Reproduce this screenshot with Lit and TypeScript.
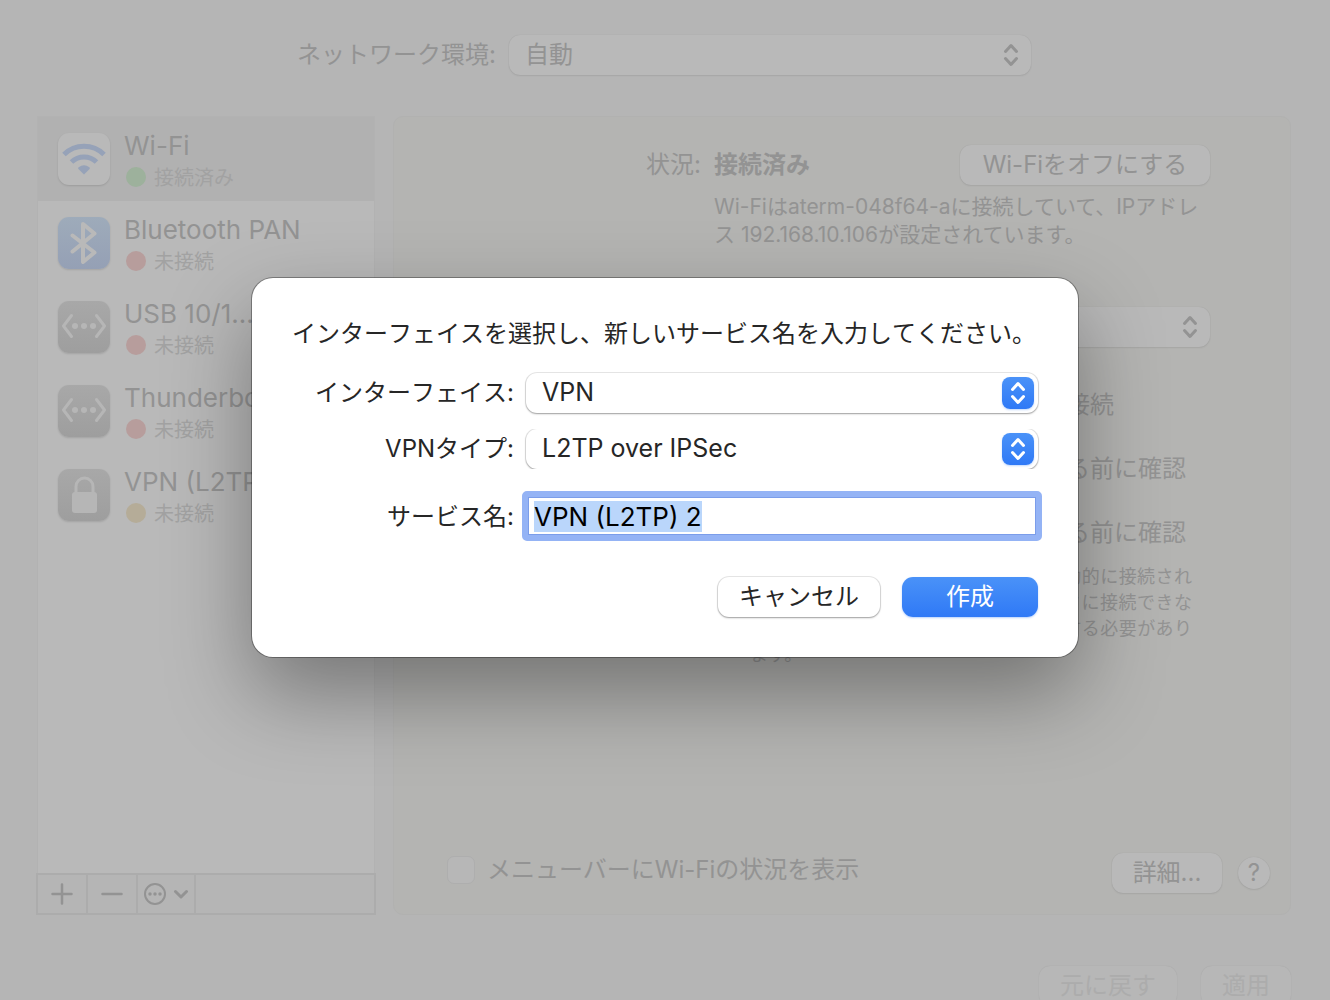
import { LitElement, html, css, svg } from "lit";
import { customElement, property, query } from "lit/decorators.js";

type IconKind = "wifi" | "bluetooth" | "ethernet" | "lock";

interface Service {
  name: string;
  state: string;
  tone: "green" | "red" | "amber";
  icon: IconKind;
}

const SERVICES: Service[] = [
  { name: "Wi-Fi", state: "接続済み", tone: "green", icon: "wifi" },
  { name: "Bluetooth PAN", state: "未接続", tone: "red", icon: "bluetooth" },
  { name: "USB 10/1…1000 LAN", state: "未接続", tone: "red", icon: "ethernet" },
  { name: "Thunderbolt ブリッジ", state: "未接続", tone: "red", icon: "ethernet" },
  { name: "VPN (L2TP)", state: "未接続", tone: "amber", icon: "lock" },
];

const GLYPHS = {
  wifi: svg`
    <g fill="none" stroke="#96a2b8" stroke-width="5">
      <path d="M6 21.500a28.500 28.500 0 0 1 40 0"></path>
      <path d="M13.500 29a18 18 0 0 1 25 0"></path>
    </g>
    <path d="M26 41.500l-5.600-5.600q-.8-.9.200-1.700a9 9 0 0 1 10.800 0q1 .8.2 1.700z" fill="#96a2b8"></path>`,
  bluetooth: svg`
    <path d="M14.500 18.500L36.500 35.500L25 45V7L36.500 16.500L14.500 34.500" fill="none" stroke="#b9b9b9"
      stroke-width="4" stroke-linejoin="round" stroke-linecap="round"></path>`,
  ethernet: svg`
    <g fill="none" stroke="#b6b6b6" stroke-width="3" stroke-linecap="round" stroke-linejoin="round">
      <path d="M13.500 14.500L5.500 25l8 10.500"></path>
      <path d="M38.500 14.500L46.500 25l-8 10.500"></path>
    </g>
    <g fill="#b6b6b6">
      <circle cx="17" cy="25" r="3"></circle><circle cx="26" cy="25" r="3"></circle><circle cx="35" cy="25" r="3"></circle>
    </g>`,
  lock: svg`
    <path d="M18 24v-6.500a8.500 8.500 0 0 1 17 0V24" fill="none" stroke="#b6b6b6" stroke-width="3"></path>
    <rect x="14" y="23" width="25" height="21" rx="3" fill="#b6b6b6"></rect>`,
};

const arrows = () => html`
  <svg class="arrows" viewBox="0 0 16 24" width="16" height="24" aria-hidden="true">
    <path d="M2.500 8.500L8 2.500l5.500 6M2.500 15.500L8 21.500l5.500-6" fill="none" stroke="currentColor"
      stroke-width="3" stroke-linecap="round" stroke-linejoin="round"></path>
  </svg>`;

const shared = css`
  * { box-sizing: border-box; }
  button, select, input { font: inherit; color: inherit; margin: 0; }
  button, select { border: 0; appearance: none; }
  svg { display: block; }
  .picker { position: relative; display: flex; min-width: 0; }
  .picker select {
    flex: 1;
    width: 100%;
    height: 40px;
    padding: 0 48px 0 16px;
    border-radius: 11px;
    outline: none;
  }
`;

@customElement("service-item")
export class ServiceItem extends LitElement {
  @property({ attribute: false }) service!: Service;

  static styles = [shared, css`
    :host { display: flex; gap: 14px; height: 84px; padding: 16px 0 0 20px; }
    :host([selected]) { background: #b1b1b1; }
    .tile {
      flex: none;
      width: 52px;
      height: 52px;
      border-radius: 11px;
      background: linear-gradient(#a8a8a8, #9e9e9e);
      box-shadow: 0 1px 2px rgba(0, 0, 0, 0.12);
    }
    .wifi { background: #b9b9b9; }
    .bluetooth { background: linear-gradient(#9eabba, #95a0b5); }
    .words { min-width: 0; white-space: nowrap; overflow: hidden; margin-top: -3px; }
    .name { font-size: 26px; line-height: 32px; }
    .state { display: flex; align-items: center; gap: 8px; font-size: 20px; line-height: 32px; color: #a2a2a2; }
    .dot { width: 20px; height: 20px; border-radius: 50%; margin: 0 0 2px 2px; }
    .green { background: #9db19c; }
    .red { background: #b79d9c; }
    .amber { background: #b5ac98; }
  `];

  render() {
    const s = this.service;
    return html`
      <div class="tile ${s.icon}">
        <svg viewBox="0 0 52 52" width="52" height="52" aria-hidden="true">${GLYPHS[s.icon]}</svg>
      </div>
      <div class="words">
        <div class="name">${s.name}</div>
        <div class="state"><span class="dot ${s.tone}"></span>${s.state}</div>
      </div>`;
  }
}

@customElement("new-service-dialog")
export class NewServiceDialog extends LitElement {
  @query("#service-name") nameField!: HTMLInputElement;

  firstUpdated() {
    this.nameField.focus();
    this.nameField.select();
  }

  static styles = [shared, css`
    :host { display: block; width: 826px; max-width: 100%; }
    .sheet {
      padding: 40px;
      border-radius: 21px;
      background: #fff;
      color: #262626;
      box-shadow: 0 0 0 1px rgba(0, 0, 0, 0.32), 0 36px 84px rgba(0, 0, 0, 0.36);
    }
    h1 { margin: 0 0 23px; font-size: 24px; font-weight: 400; line-height: 32px; font-kerning: none; }
    .fields { display: grid; grid-template-columns: 222px minmax(0, 1fr); column-gap: 12px; row-gap: 16px; }
    .fields > label { text-align: right; line-height: 40px; font-size: 24px; font-kerning: none; }
    .picker { font-size: 25px; }
    .picker select {
      padding-bottom: 2px;
      background: #fff;
      box-shadow: 0 0 0 1px rgba(0, 0, 0, 0.09), 0 1px 2px rgba(0, 0, 0, 0.32);
    }
    .clipped { clip-path: inset(0 -3px); }
    .knob {
      position: absolute;
      right: 4px;
      top: 4px;
      width: 32px;
      height: 32px;
      display: grid;
      place-items: center;
      border-radius: 8px;
      color: #fff;
      background: linear-gradient(#4a92f8, #2f79f6);
      box-shadow: 0 1px 2px rgba(47, 121, 246, 0.3);
      pointer-events: none;
    }
    .name-label { margin-top: 12px; }
    .name-box {
      height: 50px;
      min-width: 0;
      margin: 6px -4px -6px;
      padding: 1px 6px;
      border: 6px solid #94b3f5;
      border-radius: 5px;
      background: #fff;
      color: #000;
      font-size: 26px;
      line-height: 32px;
      outline: none;
      box-shadow: inset 0 0 0 1px #7b9dea;
    }
    .name-box::selection { background: rgba(186, 214, 251, 0.996); color: #000; }
    .buttons { display: flex; justify-content: flex-end; gap: 22px; margin-top: 40px; font-size: 24px; }
    .buttons button { height: 40px; padding: 0; border-radius: 11px; }
    .cancel { width: 162px; background: #fff; box-shadow: 0 0 0 1px rgba(0, 0, 0, 0.09), 0 1px 2px rgba(0, 0, 0, 0.32); }
    .buttons .create {
      width: 136px;
      color: #fff;
      background: linear-gradient(#4a92f8, #2f79f6);
      box-shadow: 0 1px 2px rgba(47, 121, 246, 0.35);
    }
  `];

  render() {
    return html`
      <form class="sheet" role="dialog" aria-labelledby="title" @submit=${(e: Event) => e.preventDefault()}>
        <h1 id="title">インターフェイスを選択し、新しいサービス名を入力してください。</h1>
        <div class="fields">
          <label for="interface">インターフェイス:</label>
          <div class="picker">
            <select id="interface"><option>VPN</option></select>
            <span class="knob">${arrows()}</span>
          </div>
          <label for="vpn-type">VPNタイプ:</label>
          <div class="picker clipped">
            <select id="vpn-type"><option>L2TP over IPSec</option></select>
            <span class="knob">${arrows()}</span>
          </div>
          <label class="name-label" for="service-name">サービス名:</label>
          <input class="name-box" id="service-name" type="text" .value=${"VPN (L2TP) 2"} autocomplete="off" spellcheck="false">
        </div>
        <div class="buttons">
          <button class="cancel" type="button">キャンセル</button>
          <button class="create" type="submit">作成</button>
        </div>
      </form>`;
  }
}

@customElement("app-root")
export class AppRoot extends LitElement {
  static styles = [shared, css`
    :host {
      display: block;
      position: relative;
      height: 100vh;
      overflow: hidden;
      background: #b5b5b5;
      color: #939393;
      font-family: Inter, "Noto Sans CJK JP", sans-serif;
      font-size: 24px;
      line-height: 32px;
    }
    .window { padding: 35px 39px 0 37px; }
    .location { display: flex; justify-content: center; align-items: center; gap: 13px; }
    .location .picker { width: 522px; }
    .soft, .picker select {
      background: #b9b9b9;
      box-shadow: 0 0 1px rgba(0, 0, 0, 0.12), 0 1px 2px rgba(0, 0, 0, 0.07);
    }
    .picker .arrows { position: absolute; right: 12px; top: 8px; pointer-events: none; }
    .body { display: flex; gap: 18px; margin-top: 41px; height: 799px; }
    .side { width: 338px; flex: none; display: flex; flex-direction: column; }
    .list { flex: 1; border: 1px solid #b2b2b2; border-bottom: 0; background: #b9b9b9; }
    .tools { display: flex; height: 42px; margin: 0 -1px; border: 2px solid #acacac; }
    .tools button {
      display: flex;
      align-items: center;
      justify-content: center;
      gap: 7px;
      width: 50px;
      padding: 0;
      background: none;
      border-right: 2px solid #acacac;
    }
    .tools .more { width: 58px; }
    .panel {
      flex: 1;
      min-width: 0;
      display: flex;
      flex-direction: column;
      justify-content: space-between;
      border: 1px solid #b1b1b0;
      border-radius: 10px;
      background: #b4b4b2;
    }
    .settings {
      display: grid;
      grid-template-columns: 307px minmax(0, 1fr);
      column-gap: 13px;
      padding: 28px 80px 0 0;
    }
    .settings > .term { text-align: right; line-height: 40px; }
    .status { display: flex; justify-content: space-between; }
    .status strong { line-height: 40px; }
    .soft { height: 40px; padding: 0; border-radius: 11px; }
    .toggle { width: 250px; }
    .detail { grid-column: 2; margin: 8px 0 0; font-size: 21px; line-height: 28px; }
    .spaced { margin-top: 58px; }
    .options { grid-column: 2; margin-top: 42px; display: grid; row-gap: 32px; }
    .check { display: flex; align-items: center; gap: 12px; white-space: nowrap; }
    .check input {
      appearance: none;
      width: 28px;
      height: 28px;
      border: 1px solid #aeaeae;
      border-radius: 7px;
      background: #b7b7b7;
    }
    .hint {
      grid-column: 2;
      width: 442px;
      margin: 15px 0 0 36px;
      font-size: 18px;
      line-height: 26px;
      text-align: justify;
    }
    .bottom { display: flex; align-items: center; padding: 0 20px 21px 53px; }
    .bottom .check { flex: 1; padding-bottom: 6px; }
    .more-info { width: 110px; }
    .help { width: 32px; height: 32px; margin-left: 16px; border-radius: 50%; }
    .footer { display: flex; justify-content: flex-end; gap: 24px; margin-top: 51px; }
    .footer button {
      height: 40px;
      padding: 0;
      border-radius: 11px;
      background: #b7b7b7;
      box-shadow: 0 0 1px rgba(0, 0, 0, 0.12);
      color: #acacac;
    }
    .revert { width: 138px; }
    .apply { width: 90px; }
    .overlay {
      position: absolute;
      inset: 0;
      display: flex;
      justify-content: center;
      align-items: flex-start;
      padding-top: 278px;
    }
  `];

  render() {
    return html`
      <main class="window">
        <div class="location">
          <label for="location">ネットワーク環境:</label>
          <div class="picker">
            <select id="location"><option>自動</option></select>
            ${arrows()}
          </div>
        </div>
        <div class="body">
          <div class="side">
            <div class="list">
              ${SERVICES.map((s, i) => html`<service-item .service=${s} ?selected=${i === 0}></service-item>`)}
            </div>
            <div class="tools">
              <button type="button" aria-label="追加">
                <svg width="22" height="22" viewBox="0 0 22 22"><path d="M1.500 11h19M11 1.500v19" stroke="currentColor" stroke-width="2.500" stroke-linecap="round"></path></svg>
              </button>
              <button type="button" aria-label="削除">
                <svg width="22" height="22" viewBox="0 0 22 22"><path d="M1.500 11h19" stroke="currentColor" stroke-width="2.500" stroke-linecap="round"></path></svg>
              </button>
              <button class="more" type="button" aria-label="その他">
                <svg width="22" height="22" viewBox="0 0 22 22">
                  <circle cx="11" cy="11" r="10" fill="none" stroke="currentColor" stroke-width="2"></circle>
                  <g fill="currentColor"><circle cx="6" cy="11" r="1.700"></circle><circle cx="11" cy="11" r="1.700"></circle><circle cx="16" cy="11" r="1.700"></circle></g>
                </svg>
                <svg width="16" height="10" viewBox="0 0 16 10"><path d="M2.500 2.500L8 8l5.500-5.500" fill="none" stroke="currentColor" stroke-width="3" stroke-linecap="round" stroke-linejoin="round"></path></svg>
              </button>
            </div>
          </div>
          <section class="panel">
            <div class="settings">
              <span class="term">状況:</span>
              <div class="status">
                <strong>接続済み</strong>
                <button class="soft toggle" type="button">Wi-Fiをオフにする</button>
              </div>
              <p class="detail">Wi-Fiはaterm-048f64-aに接続していて、IPアドレス 192.168.10.106が設定されています。</p>
              <label class="term spaced" for="network">ネットワーク名:</label>
              <div class="picker spaced">
                <select id="network"><option>aterm-048f64-a</option></select>
                ${arrows()}
              </div>
              <div class="options">
                <label class="check"><input type="checkbox">このネットワークに自動的に接続</label>
                <label class="check"><input type="checkbox">インターネット共有に接続する前に確認</label>
                <label class="check"><input type="checkbox">新しいネットワークに接続する前に確認</label>
              </div>
              <p class="hint">接続したことのあるネットワークに自動的に接続されます。接続したことのあるネットワークに接続できない場合は、手動でネットワークを選択する必要があります。</p>
            </div>
            <div class="bottom">
              <label class="check"><input type="checkbox">メニューバーにWi-Fiの状況を表示</label>
              <button class="soft more-info" type="button">詳細...</button>
              <button class="soft help" type="button" aria-label="ヘルプ">?</button>
            </div>
          </section>
        </div>
        <div class="footer">
          <button class="revert" type="button" disabled>元に戻す</button>
          <button class="apply" type="button" disabled>適用</button>
        </div>
      </main>
      <div class="overlay"><new-service-dialog></new-service-dialog></div>`;
  }
}
